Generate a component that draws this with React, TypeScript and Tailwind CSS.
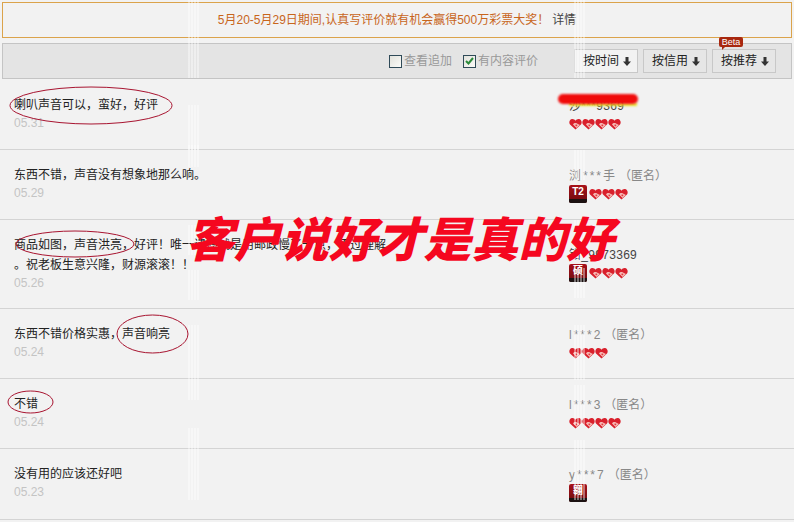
import { ReactNode } from "react";

type Review = {
  lines: string[];
  date: string;
  name: string;
  anon?: boolean;
  badge?: string;
  hearts: number;
  blurred?: boolean;
  height: string;
};

const REVIEWS: Review[] = [
  { lines: ["喇叭声音可以，蛮好，好评"], date: "05.31", name: "沙***9369", hearts: 4, blurred: true, height: "h-[70px]" },
  { lines: ["东西不错，声音没有想象地那么响。"], date: "05.29", name: "浏***手", anon: true, badge: "T2", hearts: 3, height: "h-[70px]" },
  {
    lines: ["商品如图，声音洪亮，好评！唯一遗憾就是用邮政慢了一点，不过理解", "。祝老板生意兴隆，财源滚滚！！"],
    date: "05.26",
    name: "钳_9973369",
    badge: "硕",
    hearts: 3,
    height: "h-[89px]",
  },
  { lines: ["东西不错价格实惠，声音响亮"], date: "05.24", name: "l***2", anon: true, hearts: 3, height: "h-[70px]" },
  { lines: ["不错"], date: "05.24", name: "l***3", anon: true, hearts: 4, height: "h-[70px]" },
  { lines: ["没有用的应该还好吧"], date: "05.23", name: "y***7", anon: true, badge: "翱", hearts: 0, height: "h-[71px]" },
];

// faint white watermark columns, [top, height] in page pixels
const WATERMARK = [
  { left: "left-[188px]", spans: ["top-0 h-[78px]", "top-[105px] h-[45px]", "top-[145px] h-[22px]", "top-[225px] h-[30px]", "top-[270px] h-[30px]", "top-[325px] h-[75px]", "top-[428px] h-[72px]"] },
  { left: "left-[574px]", spans: ["top-0 h-[78px]", "top-[150px] h-[30px]", "top-[220px] h-[40px]", "top-[268px] h-[30px]", "top-[325px] h-[55px]", "top-[385px] h-[40px]", "top-[440px] h-[60px]"] },
];

function Heart() {
  return (
    <svg width="13" height="12" viewBox="0 0 13 12" className="shrink-0">
      <path d="M6.500 11.500 1 6.500C-.4 4.800.4 1.200 3.200 1c1.500-.1 2.600.7 3.300 1.800C7.200 1.700 8.300.9 9.800 1c2.800.2 3.600 3.800 2.200 5.500Z" fill="#d9202c" />
      <path d="M4 6.500c1-1.500 2.500-1.800 4-1l3 1.500-3.500 3Z" fill="#f6b9b4" />
      <path d="M6 7c.8-.7 1.800-.7 2.500 0L7.500 8.500Z" fill="#e2353c" />
    </svg>
  );
}

function Badge({ label }: { label: string }) {
  return (
    <div className="mr-[2px] flex h-[18px] w-[18px] shrink-0 flex-col overflow-hidden rounded-[2px] bg-gradient-to-b from-[#a8121a] to-[#6d0a0e]">
      <span className="flex h-[14px] items-center justify-center text-[10px] leading-none font-bold text-white">{label}</span>
      <span className="h-[4px] bg-[#1c1212]" />
    </div>
  );
}

function Checkbox({ checked, children }: { checked?: boolean; children: ReactNode }) {
  return (
    <label className="flex items-center gap-[2px] text-xs text-[#999]">
      <span className="flex h-[13px] w-[13px] items-center justify-center border border-[#2f4a58] bg-gradient-to-br from-[#e2e2dc] to-[#fbfbf8]">
        {checked && (
          <svg width="9" height="8" viewBox="0 0 9 8">
            <path d="M1 4l2.500 2.500L8 1" fill="none" stroke="#2b8a3a" strokeWidth="2" />
          </svg>
        )}
      </span>
      {children}
    </label>
  );
}

function SortButton({ label, active, beta }: { label: string; active?: boolean; beta?: boolean }) {
  return (
    <button className={`relative flex h-6 w-[64px] items-center gap-1 border border-[#c8c8c8] pl-2 text-xs text-[#222] ${active ? "bg-[#f2f2f2]" : "bg-[#e6e6e6]"}`}>
      {label}
      <svg width="8" height="9" viewBox="0 0 8 9">
        <path d="M2.500 0h3v4.500H8L4 9 0 4.500h2.500Z" fill="#333" />
      </svg>
      {beta && (
        <span className="absolute top-[-13px] left-[6px] flex h-[10px] w-6 items-center justify-center rounded-[2px] bg-[#a8280f] text-[9px] leading-none text-white">
          Beta
          <span className="absolute top-[10px] left-[3px] border-t-[3px] border-r-[3px] border-t-[#a8280f] border-r-transparent" />
        </span>
      )}
    </button>
  );
}

function ReviewRow({ review }: { review: Review }) {
  return (
    <div className={`flex border-b border-[#d4d4d4] ${review.height}`}>
      <div className="w-[568px] shrink-0 pt-[15px] pl-[14px]">
        {review.lines.map((line) => (
          <p key={line} className="h-5 text-xs leading-5 whitespace-nowrap text-[#222]">
            {line}
          </p>
        ))}
        <p className="text-xs leading-[17px] text-[#c4c4c4]">{review.date}</p>
      </div>
      <div className="flex flex-col justify-center pb-[2px] pl-px">
        <div className="relative h-[19px] text-xs leading-[23px] whitespace-nowrap text-[#888]">
          <span className={review.anon ? "tracking-[2px]" : "tracking-[0.3px] text-[#444]"}>{review.name}</span>
          {review.anon && <span className="ml-0.5">（匿名）</span>}
          {review.blurred && (
            <>
              <span className="absolute top-[8px] left-0 h-[3px] w-[68px] bg-[#e6e62a] blur-[1px]" />
              <span className="absolute top-[-1px] left-[-11px] h-[10px] w-[80px] rounded-full bg-[#f00a0a] blur-[1px]" />
            </>
          )}
        </div>
        <div className="mt-px flex h-[18px] items-center">
          {review.badge && <Badge label={review.badge} />}
          {Array.from({ length: review.hearts }).map((_, i) => (
            <Heart key={i} />
          ))}
        </div>
      </div>
    </div>
  );
}

export default function App() {
  return (
    <div className="relative h-[522px] w-[794px] overflow-hidden bg-[#f2f2f2] pt-[2px] font-['Liberation_Sans','Noto_Sans_CJK_SC',sans-serif]">
      {/* Notice */}
      <div className="mx-[2px] flex h-9 items-center justify-center border border-[#dba34b] text-xs">
        <span className="text-[#c8651b]">5月20-5月29日期间,认真写评价就有机会赢得500万彩票大奖！</span>
        <span className="ml-[3px] text-[#444]">详情</span>
      </div>

      {/* Sort toolbar */}
      <div className="mx-[2px] mt-[5px] flex h-9 items-center justify-end border border-[#c4c4c4] bg-[#e4e4e4] pr-[15px]">
        <div className="mr-9 flex items-center gap-[11px]">
          <Checkbox>查看追加</Checkbox>
          <Checkbox checked>有内容评价</Checkbox>
        </div>
        <div className="flex gap-[5px]">
          <SortButton label="按时间" active />
          <SortButton label="按信用" />
          <SortButton label="按推荐" beta />
        </div>
      </div>

      {/* Reviews */}
      <div className="pt-px">
        {REVIEWS.map((review) => (
          <ReviewRow key={review.date + review.name} review={review} />
        ))}
      </div>

      {/* Watermark */}
      {WATERMARK.map((col) => (
        <div key={col.left} className={`absolute top-0 ${col.left} h-full w-[11px]`}>
          {col.spans.map((span) => (
            <div key={span} className={`absolute w-full bg-[repeating-linear-gradient(90deg,#ffffff66_0,#ffffff66_2px,transparent_2px,transparent_3px)] ${span}`} />
          ))}
        </div>
      ))}

      {/* Hand-drawn circles over the comments */}
      <svg className="absolute inset-0 h-full w-full" viewBox="0 0 794 522" fill="none" stroke="#a81430" strokeWidth="1">
        <ellipse cx="91" cy="105.500" rx="81" ry="18.500" />
        <ellipse cx="75" cy="244" rx="59" ry="13" />
        <ellipse cx="152.500" cy="334" rx="35.500" ry="19" />
        <ellipse cx="30.500" cy="402" rx="22.500" ry="11" />
      </svg>

      {/* Slogan */}
      <div className="absolute top-[206px] left-[186px] text-[47.500px] leading-[70px] font-black whitespace-nowrap text-[#f5071f] italic">
        客户说好才是真的好
      </div>
    </div>
  );
}
